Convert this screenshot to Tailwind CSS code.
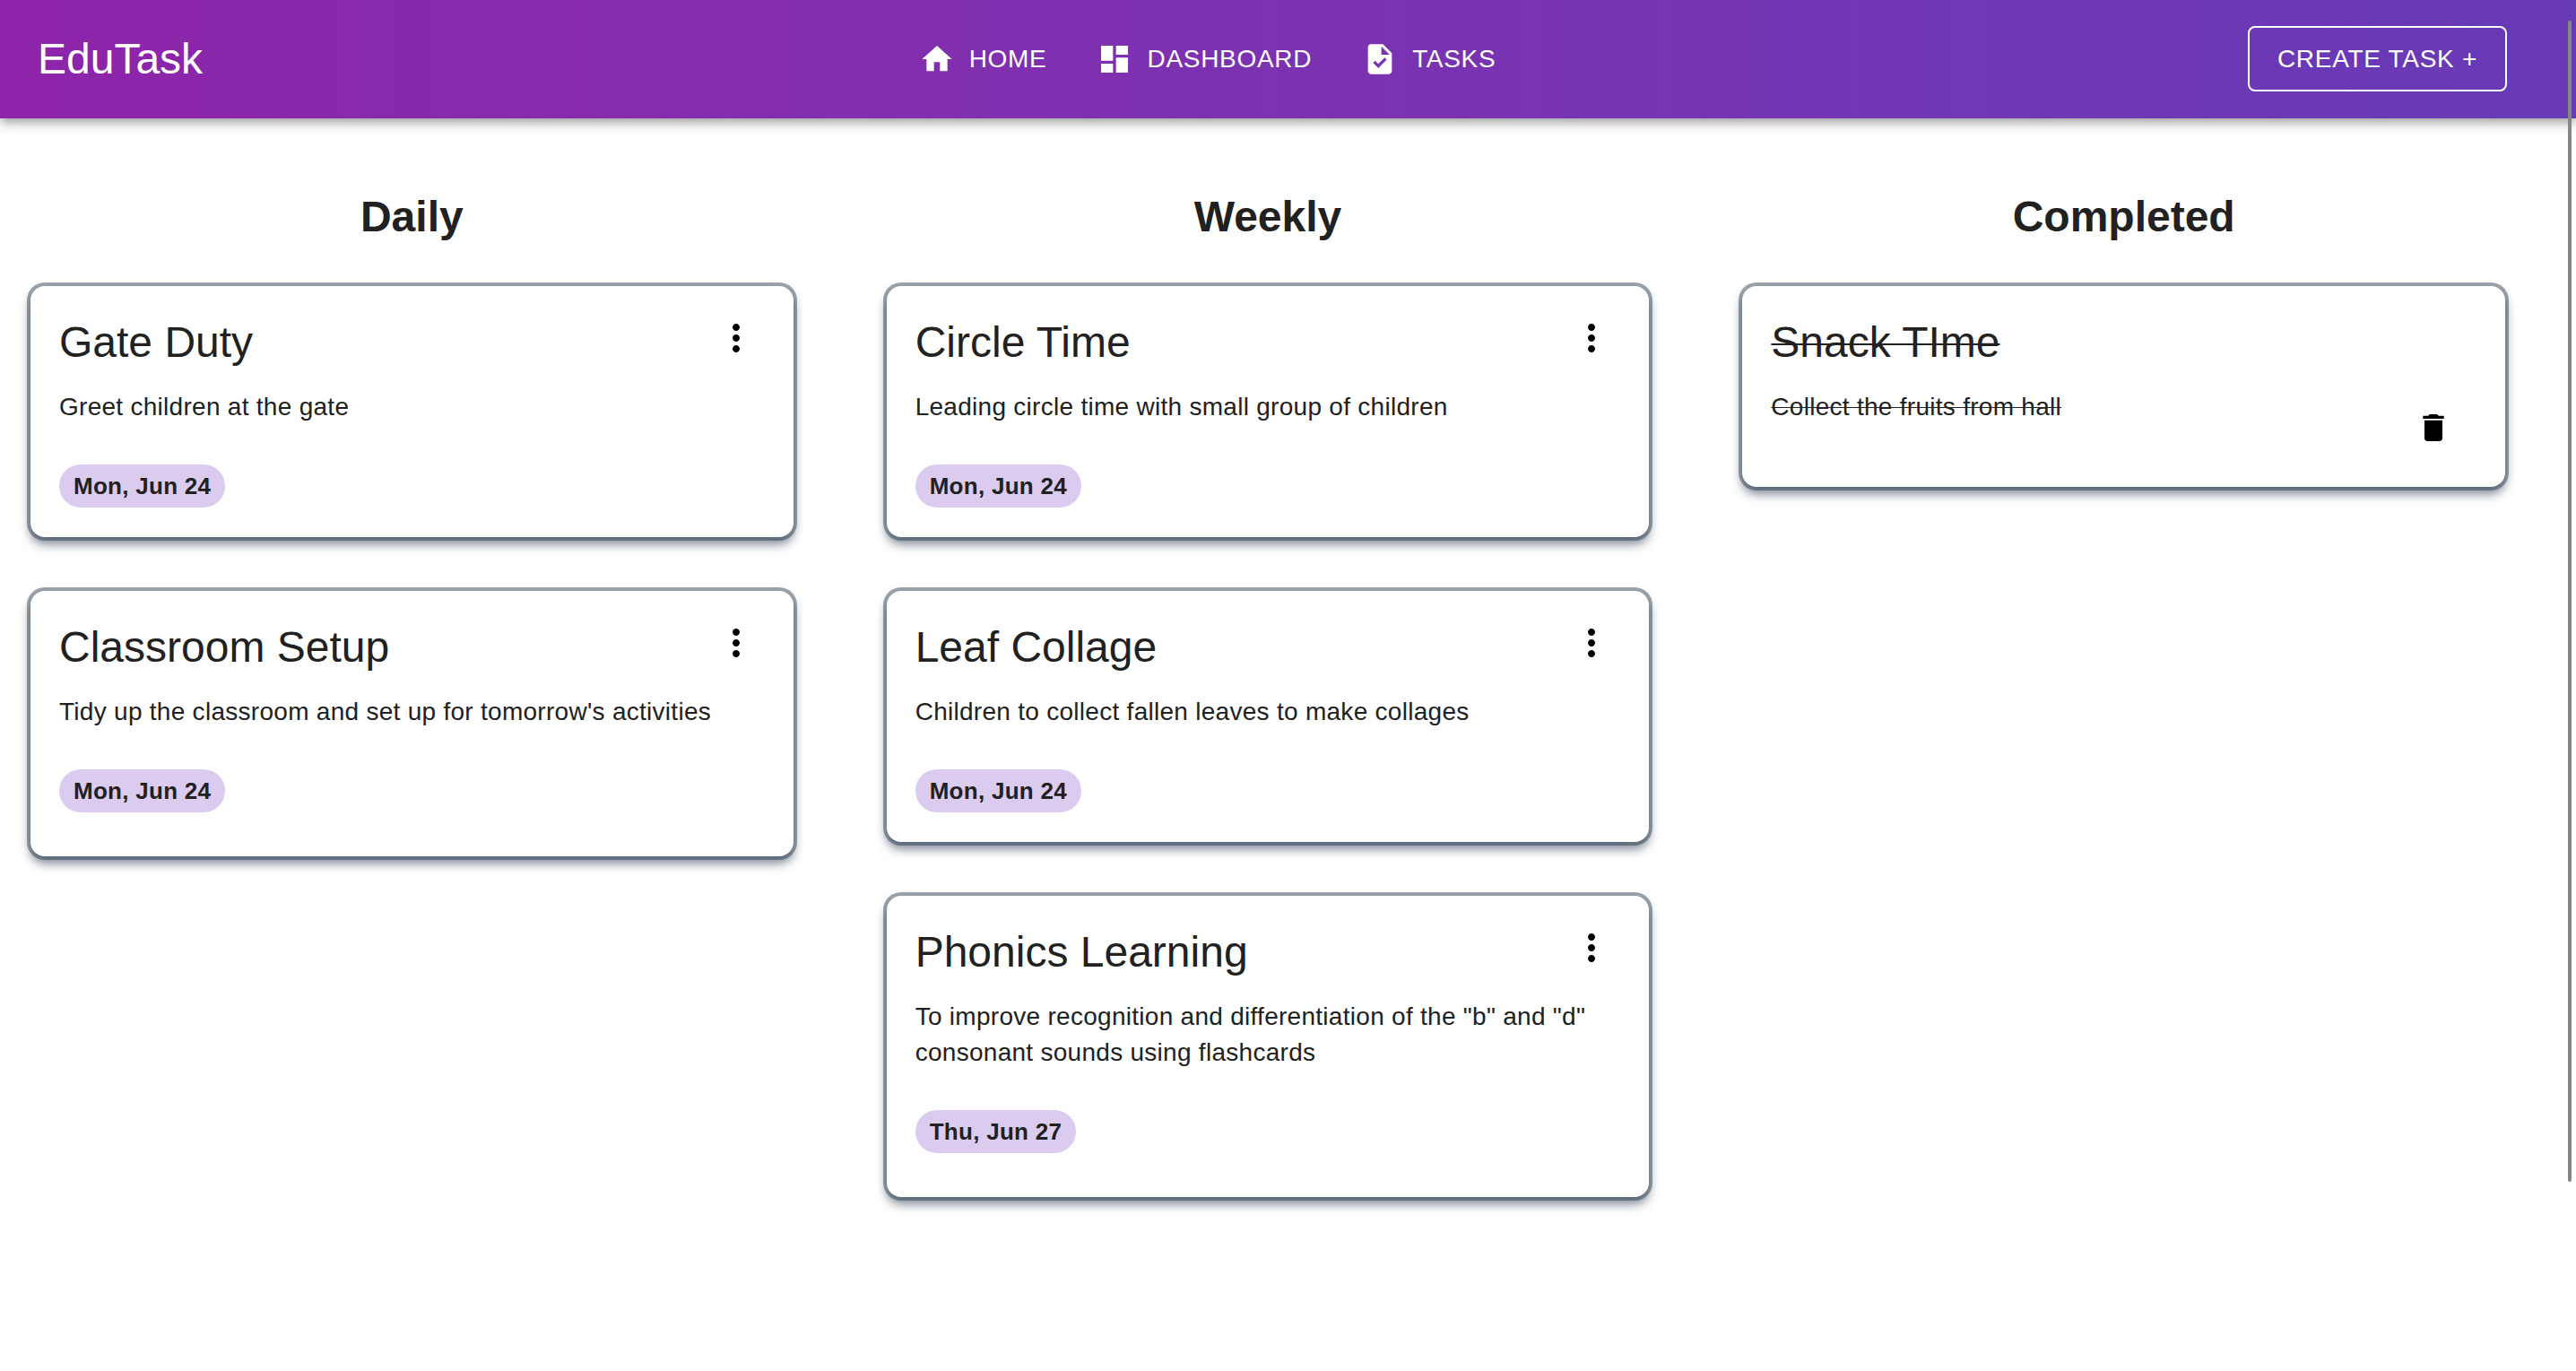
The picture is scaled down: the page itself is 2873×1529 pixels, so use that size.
<!DOCTYPE html>
<html lang="en">
<head>
<meta charset="utf-8">
<meta name="viewport" content="width=device-width, initial-scale=1">
<title>EduTask</title>
<script src="https://cdn.jsdelivr.net/npm/@tailwindcss/browser@4"></script>
</head>
<body class="min-h-screen bg-white font-['Liberation_Sans',Arial,sans-serif] text-[28px]/[40px] tracking-[0.01em] text-[#212121]">
<svg class="hidden" aria-hidden="true">
  <symbol id="more" viewBox="0 0 24 24"><path d="M12 8c1.100 0 2-.9 2-2s-.9-2-2-2-2 .9-2 2 .9 2 2 2zm0 2c-1.100 0-2 .9-2 2s.9 2 2 2 2-.9 2-2-.9-2-2-2zm0 6c-1.100 0-2 .9-2 2s.9 2 2 2 2-.9 2-2-.9-2-2-2z"/></symbol>
</svg>
<header class="flex h-[132px] items-center bg-linear-to-r from-[#8e24aa] to-[#673ab7] pr-[77px] pb-px pl-[42px] text-white shadow-[0_4px_8px_-2px_rgb(0_0_0/0.2),0_8px_10px_0_rgb(0_0_0/0.14),0_2px_20px_0_rgb(0_0_0/0.12)]">
  <a href="#" class="text-5xl/[64px] tracking-normal">EduTask</a>
  <nav class="mr-10 flex flex-1 justify-center gap-14 tracking-wide">
    <a href="#" class="flex items-center gap-4"><svg class="size-10" viewBox="0 0 24 24" fill="currentColor"><path d="M10 20v-6h4v6h5v-8h3L12 3 2 12h3v8z"/></svg>HOME</a>
    <a href="#" class="flex items-center gap-4"><svg class="size-10" viewBox="0 0 24 24" fill="currentColor"><path d="M3 13h8V3H3v10zm0 8h8v-6H3v6zm10 0h8V11h-8v10zm0-18v6h8V3h-8z"/></svg>DASHBOARD</a>
    <a href="#" class="flex items-center gap-4"><svg class="size-10" viewBox="0 0 24 24" fill="currentColor"><path d="M14 2H6c-1.100 0-1.990.9-1.990 2L4 20c0 1.100.89 2 1.990 2H18c1.100 0 2-.9 2-2V8l-6-6zm-3.060 16L7.400 14.460l1.410-1.410 2.120 2.120 4.240-4.240 1.410 1.410L10.940 18zM13 9V3.500L18.500 9H13z"/></svg>TASKS</a>
  </nav>
  <button type="button" class="h-[73px] rounded-lg border-2 border-white px-[31px] tracking-wide">CREATE TASK +</button>
</header>

<main class="grid grid-cols-3 items-start gap-[104px] pt-[78px] pr-[79px] pb-16 pl-[34px]">
  <section>
    <h2 class="mb-[45px] text-center text-5xl/[64px] font-bold tracking-normal">Daily</h2>
    <div class="flex flex-col gap-[60px]">
      <article class="rounded-2xl bg-white px-8 pt-[31px] pb-8 shadow-[0_0_0_4px_rgb(50_70_84/0.48),0_8px_12px_0_rgb(14_30_60/0.5),0_2px_12px_0_rgb(14_30_60/0.12)]">
        <div class="flex items-start justify-between"><h3 class="text-5xl/[64px] tracking-normal">Gate Duty</h3><button type="button" aria-label="Task options" class="mt-[3px] mr-2"><svg class="size-12 fill-black"><use href="#more"/></svg></button></div>
        <p class="mt-5 mb-11">Greet children at the gate</p>
        <time class="mb-px inline-block rounded-full bg-[#dacbef] px-4 align-top text-[26px]/[48px] font-bold">Mon, Jun 24</time>
      </article>
      <article class="rounded-2xl bg-white px-8 pt-[31px] pb-12 shadow-[0_0_0_4px_rgb(50_70_84/0.48),0_8px_12px_0_rgb(14_30_60/0.5),0_2px_12px_0_rgb(14_30_60/0.12)]">
        <div class="flex items-start justify-between"><h3 class="text-5xl/[64px] tracking-normal">Classroom Setup</h3><button type="button" aria-label="Task options" class="mt-[3px] mr-2"><svg class="size-12 fill-black"><use href="#more"/></svg></button></div>
        <p class="mt-5 mb-11">Tidy up the classroom and set up for tomorrow's activities</p>
        <time class="mb-px inline-block rounded-full bg-[#dacbef] px-4 align-top text-[26px]/[48px] font-bold">Mon, Jun 24</time>
      </article>
    </div>
  </section>
  <section>
    <h2 class="mb-[45px] text-center text-5xl/[64px] font-bold tracking-normal">Weekly</h2>
    <div class="flex flex-col gap-[60px]">
      <article class="rounded-2xl bg-white px-8 pt-[31px] pb-8 shadow-[0_0_0_4px_rgb(50_70_84/0.48),0_8px_12px_0_rgb(14_30_60/0.5),0_2px_12px_0_rgb(14_30_60/0.12)]">
        <div class="flex items-start justify-between"><h3 class="text-5xl/[64px] tracking-normal">Circle Time</h3><button type="button" aria-label="Task options" class="mt-[3px] mr-2"><svg class="size-12 fill-black"><use href="#more"/></svg></button></div>
        <p class="mt-5 mb-11">Leading circle time with small group of children</p>
        <time class="mb-px inline-block rounded-full bg-[#dacbef] px-4 align-top text-[26px]/[48px] font-bold">Mon, Jun 24</time>
      </article>
      <article class="rounded-2xl bg-white px-8 pt-[31px] pb-8 shadow-[0_0_0_4px_rgb(50_70_84/0.48),0_8px_12px_0_rgb(14_30_60/0.5),0_2px_12px_0_rgb(14_30_60/0.12)]">
        <div class="flex items-start justify-between"><h3 class="text-5xl/[64px] tracking-normal">Leaf Collage</h3><button type="button" aria-label="Task options" class="mt-[3px] mr-2"><svg class="size-12 fill-black"><use href="#more"/></svg></button></div>
        <p class="mt-5 mb-11">Children to collect fallen leaves to make collages</p>
        <time class="mb-px inline-block rounded-full bg-[#dacbef] px-4 align-top text-[26px]/[48px] font-bold">Mon, Jun 24</time>
      </article>
      <article class="rounded-2xl bg-white px-8 pt-[31px] pb-12 shadow-[0_0_0_4px_rgb(50_70_84/0.48),0_8px_12px_0_rgb(14_30_60/0.5),0_2px_12px_0_rgb(14_30_60/0.12)]">
        <div class="flex items-start justify-between"><h3 class="text-5xl/[64px] tracking-normal">Phonics Learning</h3><button type="button" aria-label="Task options" class="mt-[3px] mr-2"><svg class="size-12 fill-black"><use href="#more"/></svg></button></div>
        <p class="mt-5 mb-11">To improve recognition and differentiation of the "b" and "d" consonant sounds using flashcards</p>
        <time class="mb-px inline-block rounded-full bg-[#dacbef] px-4 align-top text-[26px]/[48px] font-bold">Thu, Jun 27</time>
      </article>
    </div>
  </section>
  <section>
    <h2 class="mb-[45px] text-center text-5xl/[64px] font-bold tracking-normal">Completed</h2>
    <article class="flex items-end justify-between rounded-2xl bg-white pt-[31px] pr-[60px] pb-[46px] pl-8 shadow-[0_0_0_4px_rgb(50_70_84/0.48),0_8px_12px_0_rgb(14_30_60/0.5),0_2px_12px_0_rgb(14_30_60/0.12)]">
      <div class="pb-[23px]">
        <h3 class="text-5xl/[64px] tracking-normal line-through decoration-2">Snack TIme</h3>
        <p class="mt-5 line-through decoration-1">Collect the fruits from hall</p>
      </div>
      <button type="button" aria-label="Delete task"><svg class="size-10 fill-black" viewBox="0 0 24 24"><path d="M6 19c0 1.100.9 2 2 2h8c1.100 0 2-.9 2-2V7H6v12zM19 4h-3.500l-1-1h-5l-1 1H5v2h14V4z"/></svg></button>
    </article>
  </section>
</main>
<div class="fixed top-[23px] right-[5px] bottom-[211px] w-1 rounded-full bg-[#868686]"></div>
</body>
</html>
